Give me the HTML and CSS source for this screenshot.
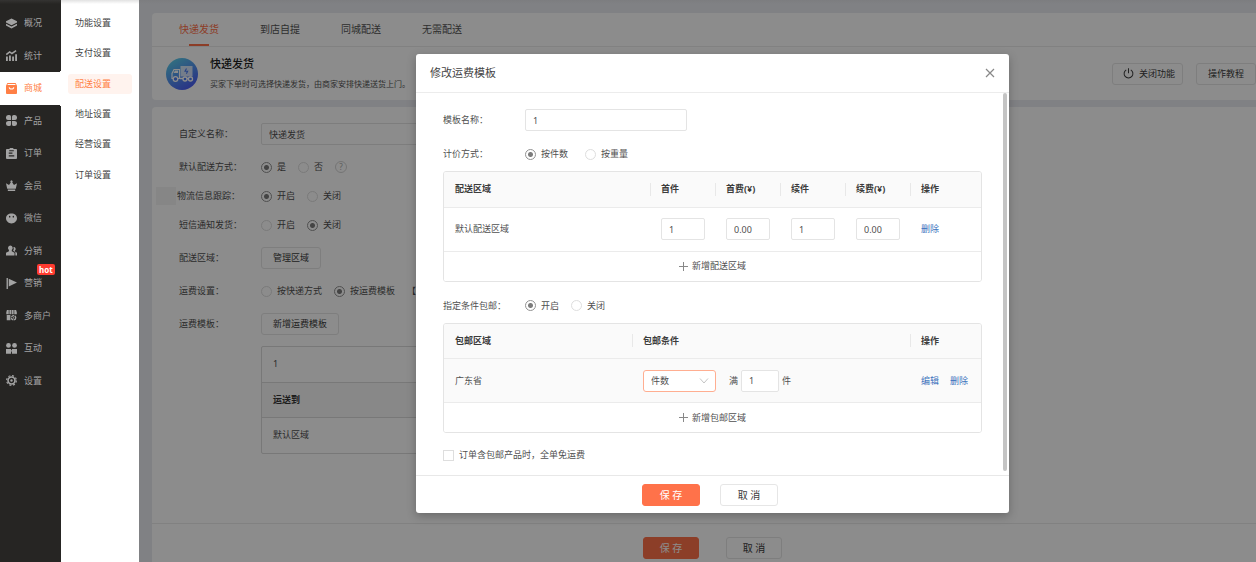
FILE: index.html
```html
<!DOCTYPE html>
<html lang="zh-CN">
<head>
    <meta charset="UTF-8">
    <meta name="viewport" content="width=device-width, initial-scale=1.0">
    <title>配送设置</title>
    <link rel="stylesheet" href="styles.css">
</head>
<body>
<div class="layout">
    <nav class="sidebar">
        <div class="sidebar-list">
            <a href="#" class="nav-item">
                <svg class="nav-icon" viewBox="0 0 12 12"><path d="M6 .6l6 3v1.200L6 7.800 0 4.800V3.600z"/><path d="M0 6.200l6 3 6-3v2L6 11.400 0 8.200z"/></svg>
                <span>概况</span>
            </a>
            <a href="#" class="nav-item">
                <svg class="nav-icon" viewBox="0 0 12 12"><path d="M.3 5L4 2l2.500 1.800L11 .8" fill="none" stroke="currentColor" stroke-width="1.600"/><path d="M0 7h2v5H0zM3.300 6h2v6h-2zM6.700 7h2v5h-2zM10 4.500h2V12h-2z"/></svg>
                <span>统计</span>
            </a>
            <a href="#" class="nav-item active">
                <svg class="nav-icon" viewBox="0 0 12 12"><path fill-rule="evenodd" d="M1.500 0h9L12 3v8a1 1 0 0 1-1 1H1a1 1 0 0 1-1-1V3zM2 1.200L1.500 2.200h9L10 1.200zM3 4.500a3 2.500 0 0 0 6 0H8a2 1.500 0 0 1-4 0z"/></svg>
                <span>商城</span>
            </a>
            <a href="#" class="nav-item">
                <svg class="nav-icon" viewBox="0 0 12 12"><path d="M2.700 0h1A2 2 0 0 1 5.500 2v3.500H2.700a2.700 2.700 0 0 1 0-5.500zM9.300 0a2.700 2.700 0 0 1 0 5.500H6.500V2a2 2 0 0 1 2-2zM2.700 6.500h2.800V10a2 2 0 0 1-2 2h-.8a2.700 2.700 0 0 1 0-5.500zM6.500 6.500h2.800a2.700 2.700 0 0 1 0 5.500h-.8a2 2 0 0 1-2-2z"/></svg>
                <span>产品</span>
            </a>
            <a href="#" class="nav-item">
                <svg class="nav-icon" viewBox="0 0 12 12"><path fill-rule="evenodd" d="M4 0h4v1h3a1 1 0 0 1 1 1v9a1 1 0 0 1-1 1H1a1 1 0 0 1-1-1V2a1 1 0 0 1 1-1h3zM3.500 2.500v1h5v-1zM3 5v1.200h4V5zM3 8v1.200h6V8z"/></svg>
                <span>订单</span>
            </a>
            <a href="#" class="nav-item">
                <svg class="nav-icon" viewBox="0 0 12 12"><path d="M0 3.500l3.300 2L5.300 2.500a1.200 1.200 0 1 1 1.400 0l2 3 3.300-2-1.300 6H1.300zM2 10.300h8V12H2z"/></svg>
                <span>会员</span>
            </a>
            <a href="#" class="nav-item">
                <svg class="nav-icon" viewBox="0 0 12 12"><path fill-rule="evenodd" d="M6 .6c3.400 0 6 2.200 6 5.200S9.400 11.400 6 11.400 0 8.800 0 5.800 2.600.6 6 .6zM4 3a.8 1 0 1 0 0 2 .8 1 0 0 0 0-2zM8 3a.8 1 0 1 0 0 2 .8 1 0 0 0 0-2z"/></svg>
                <span>微信</span>
            </a>
            <a href="#" class="nav-item">
                <svg class="nav-icon" viewBox="0 0 12 12"><path d="M4.800.5a2.600 2.800 0 0 1 1.500 5v1.200l3 1.800V11.500H0V8.500l3.200-1.800V5.500A2.700 2.800 0 0 1 4.800.5z"/><path d="M8 2.200a2.200 2.200 0 0 1 1.600 4v.8L12 8.500V11.500h-1.800V8L7.700 6.300C8.700 5 8.700 3.500 8 2.200z"/></svg>
                <span>分销</span>
            </a>
            <a href="#" class="nav-item">
                <svg class="nav-icon" viewBox="0 0 12 12"><path d="M.6 0h1.500v12H.6zM3 .8L12 5 3 9.200z"/></svg>
                <span>营销</span>
                <b class="hot">hot</b>
            </a>
            <a href="#" class="nav-item">
                <svg class="nav-icon" viewBox="0 0 12 12"><path d="M1 0h2v4.500H.3V2.500zM3.700 0H5.700v4.500h-2zM6.300 0h2v4.500h-2zM9 0h2l.8 2.500v2H9zM.8 5.500h4v5.800h-4z"/><circle cx="8.300" cy="8.500" r="2.300" fill="none" stroke="currentColor" stroke-width="1.500" stroke-dasharray="3 .6"/><path d="M7.700 8h1.200v1.200H7.700z"/></svg>
                <span>多商户</span>
            </a>
            <a href="#" class="nav-item">
                <svg class="nav-icon" viewBox="0 0 12 12"><circle cx="2.700" cy="2.700" r="2.600"/><circle cx="9.300" cy="2.700" r="2.600"/><path d="M0 6.500h5.500v5.300H0zM6.500 6.500H12v5.300H6.500zM5 7.800h2v1.400H5z"/></svg>
                <span>互动</span>
            </a>
            <a href="#" class="nav-item">
                <svg class="nav-icon" viewBox="0 0 12 12"><circle cx="6" cy="6" r="3.800" fill="none" stroke="currentColor" stroke-width="1.800"/><circle cx="6" cy="6" r="5.300" fill="none" stroke="currentColor" stroke-width="1.300" stroke-dasharray="2.160 2"/><circle cx="6" cy="6" r="1.300"/></svg>
                <span>设置</span>
            </a>
        </div>
    </nav>

    <nav class="submenu">
        <div class="submenu-list">
            <a href="#">功能设置</a>
            <a href="#">支付设置</a>
            <a href="#" class="active">配送设置</a>
            <a href="#">地址设置</a>
            <a href="#">经营设置</a>
            <a href="#">订单设置</a>
        </div>
    </nav>

    <main class="main">
        <section class="panel">
            <div class="tabs">
                <a href="#" class="tab active">快递发货</a>
                <a href="#" class="tab">到店自提</a>
                <a href="#" class="tab">同城配送</a>
                <a href="#" class="tab">无需配送</a>
            </div>
            <div class="intro">
                <svg class="truck" viewBox="0 0 32 32">
                    <defs>
                        <linearGradient id="truckBg" x1="0.2" y1="0" x2="0.8" y2="1">
                            <stop offset="0" stop-color="#5bd0ea"/>
                            <stop offset="1" stop-color="#4a55f5"/>
                        </linearGradient>
                    </defs>
                    <circle cx="16" cy="16" r="16" fill="url(#truckBg)"/>
                    <path d="M14.500 8h12v10.500h-12z" fill="#fff" fill-opacity=".75"/>
                    <path d="M6 20.500v-5l2-4h5.500v9z" fill="none" stroke="#fff" stroke-width="1.200"/>
                    <path d="M7.500 15l1.500-2.500h3V15z" fill="#fff"/>
                    <path d="M14 20.500h12.500" stroke="#fff" stroke-width="1.500"/>
                    <path d="M20.500 10.500l-1.500 2.800h2.600l-1.200 2.500" fill="none" stroke="#4a7af0" stroke-width="1.100"/>
                    <g fill="#4a7af0" stroke="#fff" stroke-width="1.300"><circle cx="9.500" cy="21" r="2.300"/><circle cx="19" cy="21" r="2"/><circle cx="24.500" cy="21" r="2"/></g>
                </svg>
                <div class="intro-text">
                    <h1>快递发货</h1>
                    <p>买家下单时可选择快递发货，由商家安排快递送货上门。</p>
                </div>
                <button type="button" class="btn btn-power">
                    <svg class="power" viewBox="0 0 12 12"><path d="M3.500 2a4.800 4.800 0 1 0 5 0M6 .3v5.500" fill="none" stroke="currentColor" stroke-width="1.100"/></svg>
                    关闭功能
                </button>
                <button type="button" class="btn">操作教程</button>
            </div>
        </section>

        <section class="panel panel-form">
            <div class="row">
                <label class="row-label" for="customName">自定义名称：</label>
                <input type="text" class="text name-input" id="customName" value="快递发货">
            </div>
            <div class="row compact">
                <span class="row-label">默认配送方式：</span>
                <div class="options">
                    <label><input type="radio" name="isDefault" checked>是</label>
                    <label><input type="radio" name="isDefault">否</label>
                    <span class="help">?</span>
                </div>
            </div>
            <div class="row compact tracking">
                <span class="patch"></span>
                <span class="row-label">物流信息跟踪：</span>
                <div class="options">
                    <label><input type="radio" name="tracking" checked>开启</label>
                    <label><input type="radio" name="tracking">关闭</label>
                </div>
            </div>
            <div class="row">
                <span class="row-label">短信通知发货：</span>
                <div class="options">
                    <label><input type="radio" name="sms">开启</label>
                    <label><input type="radio" name="sms" checked>关闭</label>
                </div>
            </div>
            <div class="row">
                <span class="row-label">配送区域：</span>
                <button type="button" class="btn">管理区域</button>
            </div>
            <div class="row">
                <span class="row-label">运费设置：</span>
                <div class="options">
                    <label><input type="radio" name="freight">按快递方式</label>
                    <label><input type="radio" name="freight" checked>按运费模板</label>
                    <span>【</span>
                </div>
            </div>
            <div class="row">
                <span class="row-label">运费模板：</span>
                <button type="button" class="btn">新增运费模板</button>
            </div>
            <div class="template">
                <div class="template-name">1</div>
                <table>
                    <thead><tr><th>运送到</th></tr></thead>
                    <tbody><tr><td>默认区域</td></tr></tbody>
                </table>
            </div>
        </section>

        <div class="page-footer">
            <button type="button" class="btn btn-primary">保 存</button>
            <button type="button" class="btn">取 消</button>
        </div>

        <div class="overlay">
            <div class="modal" role="dialog" aria-labelledby="modalTitle">
                <div class="modal-header">
                    <h2 id="modalTitle">修改运费模板</h2>
                    <button type="button" class="close" aria-label="关闭">
                        <svg viewBox="0 0 10 10"><path d="M1 1l8 8M9 1L1 9" fill="none" stroke="currentColor" stroke-width="1.200"/></svg>
                    </button>
                </div>
                <div class="modal-body">
                    <form class="modal-form">
                        <div class="field">
                            <label class="field-label" for="templateName">模板名称：</label>
                            <input type="text" class="text template-input" id="templateName" value="1">
                        </div>
                        <div class="field">
                            <span class="field-label">计价方式：</span>
                            <div class="options wide">
                                <label><input type="radio" name="pricing" checked>按件数</label>
                                <label><input type="radio" name="pricing">按重量</label>
                            </div>
                        </div>
                        <div class="grid-table">
                            <table>
                                <thead>
                                    <tr>
                                        <th class="col-area">配送区域</th>
                                        <th class="col-num">首件</th>
                                        <th class="col-num">首费(¥)</th>
                                        <th class="col-num">续件</th>
                                        <th class="col-num">续费(¥)</th>
                                        <th>操作</th>
                                    </tr>
                                </thead>
                                <tbody>
                                    <tr>
                                        <td>默认配送区域</td>
                                        <td><input type="text" class="text num" aria-label="首件" value="1"></td>
                                        <td><input type="text" class="text num" aria-label="首费" value="0.00"></td>
                                        <td><input type="text" class="text num" aria-label="续件" value="1"></td>
                                        <td><input type="text" class="text num" aria-label="续费" value="0.00"></td>
                                        <td><a href="#">删除</a></td>
                                    </tr>
                                </tbody>
                            </table>
                            <button type="button" class="add-row">
                                <svg viewBox="0 0 9 9"><path d="M4.500 0v9M0 4.500h9" stroke="currentColor" fill="none"/></svg>
                                新增配送区域
                            </button>
                        </div>
                        <div class="field">
                            <span class="field-label">指定条件包邮：</span>
                            <div class="options">
                                <label><input type="radio" name="freeShip" checked>开启</label>
                                <label><input type="radio" name="freeShip">关闭</label>
                            </div>
                        </div>
                        <div class="grid-table">
                            <table>
                                <thead>
                                    <tr>
                                        <th class="col-free">包邮区域</th>
                                        <th>包邮条件</th>
                                        <th class="col-action">操作</th>
                                    </tr>
                                </thead>
                                <tbody>
                                    <tr class="hovered">
                                        <td>广东省</td>
                                        <td>
                                            <div class="condition">
                                                <div class="select">
                                                    <select aria-label="包邮条件">
                                                        <option>件数</option>
                                                    </select>
                                                    <svg viewBox="0 0 10 6"><path d="M1 .5l4 4.500 4-4.500" fill="none" stroke="currentColor"/></svg>
                                                </div>
                                                <label for="freeCount">满</label>
                                                <input type="text" class="text count" id="freeCount" value="1">
                                                <span>件</span>
                                            </div>
                                        </td>
                                        <td><div class="links"><a href="#">编辑</a><a href="#">删除</a></div></td>
                                    </tr>
                                </tbody>
                            </table>
                            <button type="button" class="add-row">
                                <svg viewBox="0 0 9 9"><path d="M4.500 0v9M0 4.500h9" stroke="currentColor" fill="none"/></svg>
                                新增包邮区域
                            </button>
                        </div>
                        <label class="check"><input type="checkbox">订单含包邮产品时，全单免运费</label>
                    </form>
                    <div class="scrollbar"></div>
                </div>
                <div class="modal-footer">
                    <button type="button" class="btn btn-primary">保 存</button>
                    <button type="button" class="btn">取 消</button>
                </div>
            </div>
        </div>
    </main>
</div>
</body>
</html>
```

FILE: styles.css
```css
/* General Reset */
* {
    margin: 0;
    padding: 0;
    box-sizing: border-box;
}

body {
    font-family: "Noto Sans", "Noto Sans CJK SC", sans-serif;
    font-size: 9px;
    line-height: 14px;
    color: #505050;
}

a {
    text-decoration: none;
    color: #3a72bd;
}

button, input, select {
    font: inherit;
    color: inherit;
}

button {
    cursor: pointer;
}

.layout {
    display: flex;
    min-height: 100vh;
    position: relative;
}

/* shadow under the top bar */
.layout::before {
    content: "";
    position: absolute;
    top: 0;
    left: 0;
    right: 0;
    height: 4px;
    z-index: 5;
    background: linear-gradient(rgba(110, 110, 110, 0.2), rgba(110, 110, 110, 0));
}

/* Sidebar */
.sidebar {
    width: 61px;
    flex: none;
    padding-top: 7px;
    background: #262523;
}

.sidebar-list {
    display: grid;
    grid-template-rows: repeat(12, 1fr);
    height: 390px;
}

.nav-item {
    position: relative;
    display: flex;
    align-items: center;
    gap: 7px;
    padding-left: 6px;
    color: #a3a3a3;
}

.nav-icon {
    width: 11px;
    height: 11px;
    fill: currentColor;
}

.nav-item.active {
    background: #fff;
    color: #ff7f45;
}

.nav-item.active::before,
.nav-item.active::after {
    content: "";
    position: absolute;
    right: 0;
    width: 3px;
    height: 3px;
}

.nav-item.active::before {
    top: -3px;
    background: radial-gradient(circle at 0 0, transparent 3px, #fff 3px);
}

.nav-item.active::after {
    bottom: -3px;
    background: radial-gradient(circle at 0 100%, transparent 3px, #fff 3px);
}

.hot {
    position: absolute;
    top: -3px;
    left: 37px;
    padding: 0 2px;
    border-radius: 2px;
    background: #ff3b30;
    color: #fff;
    font-size: 8px;
    line-height: 11px;
}

.submenu {
    width: 78px;
    flex: none;
    padding: 8px 7px 0;
    background: #fff;
}

.submenu-list {
    display: grid;
    grid-template-rows: repeat(6, 1fr);
    align-items: center;
    height: 182px;
}

.submenu a {
    padding: 3px 7px;
    border-radius: 3px;
    color: #444;
}

.submenu a.active {
    background: #fff3ee;
    color: #ff7f45;
}

/* Page */
.main {
    flex: 1;
    min-width: 0;
    position: relative;
    display: flex;
    flex-direction: column;
    padding: 13px 0 0 13px;
    background: #e9ecf0;
}

.panel {
    margin-bottom: 7px;
    border-radius: 4px 0 0 4px;
    background: #fff;
}

.tabs {
    display: flex;
    gap: 41px;
    padding-left: 27px;
    border-bottom: 1px solid #ebebeb;
    font-size: 10px;
}

.tab {
    position: relative;
    line-height: 33px;
    color: #555;
}

.tab.active {
    color: #ff6f47;
}

.tab.active::after {
    content: "";
    position: absolute;
    left: 10px;
    right: 10px;
    bottom: 0;
    height: 2px;
    background: #ff6f47;
}

.intro {
    display: flex;
    align-items: center;
    gap: 13px;
    height: 53px;
    padding-left: 14px;
}

.truck {
    width: 32px;
    height: 32px;
}

.intro-text {
    flex: 1;
    margin-left: -1px;
}

.intro h1 {
    margin-bottom: 5px;
    font-size: 11px;
    font-weight: 500;
    line-height: 16px;
    color: #222;
}

.intro p {
    font-size: 8px;
    color: #555;
}

.btn {
    height: 22px;
    padding: 0 11px;
    border: 1px solid #e6e6e6;
    border-radius: 3px;
    background: #fff;
    color: #3c3c3c;
    line-height: 18px;
}

.btn-primary {
    border-color: #ff724a;
    background: #ff724a;
    color: #fff;
}

.btn-power {
    display: flex;
    align-items: center;
    gap: 5px;
    padding: 0 7px 0 10px;
}

.power {
    width: 11px;
    height: 11px;
}

.text {
    height: 22px;
    padding: 0 7px;
    border: 1px solid #e4e4e4;
    border-radius: 2px;
    background: #fff;
    outline: none;
}

.panel-form {
    flex: 1;
    margin-bottom: 0;
    padding-top: 16px;
    border-radius: 4px 0 0 0;
}

.row {
    display: flex;
    align-items: center;
    height: 22px;
    margin-bottom: 11px;
    padding-left: 27px;
}

.row.compact {
    margin-bottom: 7px;
}

.row-label {
    width: 82px;
}

.row.tracking {
    padding-left: 4px;
}

.patch {
    width: 20px;
    height: 18px;
    margin-right: 1px;
    background: #f5f5f5;
}

.tracking .row-label {
    width: 84px;
}

.name-input {
    width: 240px;
}

.options {
    display: flex;
    align-items: center;
    gap: 12px;
}

.options.wide {
    gap: 17px;
}

.options label,
.check {
    display: flex;
    align-items: center;
    gap: 5px;
}

input[type="radio"],
input[type="checkbox"] {
    appearance: none;
    width: 11px;
    height: 11px;
    border: 1px solid #dedede;
    background: #fff;
}

input[type="radio"] {
    border-radius: 50%;
}

input[type="radio"]:checked {
    border-color: #929292;
    background: radial-gradient(circle, #7c7c7c 2px, #fff 3px);
}

.help {
    width: 12px;
    height: 12px;
    border: 1px solid #d4d4d4;
    border-radius: 50%;
    color: #aaa;
    font-size: 8px;
    line-height: 10px;
    text-align: center;
}

.template {
    width: 600px;
    margin-left: 109px;
    border: 1px solid #dadada;
    border-radius: 2px;
}

.template table {
    width: 100%;
    border-collapse: collapse;
}

.template-name,
.template th,
.template td {
    height: 35px;
    padding: 0 11px;
    line-height: 34px;
    text-align: left;
}

.template th {
    border-top: 1px solid #dadada;
    border-bottom: 1px solid #dadada;
    background: #f8f8f8;
    color: #333;
}

.page-footer {
    display: flex;
    align-items: center;
    justify-content: center;
    gap: 27px;
    height: 39px;
    padding: 9px 0 0 17px;
    border-top: 1px solid #ebebeb;
    background: #fff;
}

.page-footer .btn,
.modal-footer .btn {
    width: 56px;
    font-size: 10px;
}

/* Modal */
.overlay {
    position: absolute;
    inset: 0;
    display: flex;
    align-items: flex-start;
    justify-content: center;
    padding: 54px 0 0 30px;
    background: rgba(0, 0, 0, 0.45);
}

.modal {
    width: 593px;
    border-radius: 3px;
    background: #fff;
    box-shadow: 0 3px 10px rgba(0, 0, 0, 0.25);
}

.modal-header {
    display: flex;
    align-items: center;
    justify-content: space-between;
    height: 39px;
    padding: 0 14px;
    border-bottom: 1px solid #ececec;
}

.modal-header h2 {
    font-size: 11px;
    font-weight: 400;
    color: #444;
}

.close {
    display: flex;
    border: none;
    background: none;
    color: #888;
}

.close svg {
    width: 10px;
    height: 10px;
}

.modal-body {
    display: flex;
}

.modal-form {
    flex: 1;
    padding: 16px 21px 13px 27px;
}

.scrollbar {
    width: 4px;
    margin: 0 2px 4px 0;
    border-radius: 2px;
    background: #c4c4c4;
}

.field {
    display: flex;
    align-items: center;
    height: 22px;
    margin-bottom: 12px;
}

.field-label {
    width: 82px;
}

.template-input {
    width: 162px;
}

.field + .grid-table {
    margin-top: -6px;
}

.grid-table {
    margin-bottom: 13px;
    overflow: hidden;
    border: 1px solid #e4e4e4;
    border-radius: 3px;
}

.grid-table table {
    width: 100%;
    table-layout: fixed;
    border-collapse: collapse;
}

.grid-table th,
.grid-table td {
    padding-left: 11px;
    border-bottom: 1px solid #ebebeb;
    text-align: left;
}

.grid-table th {
    height: 35px;
    background: #fafafa;
    color: #3c3c3c;
}

/* short divider between header cells */
.grid-table th + th {
    background: linear-gradient(#e8e8e8, #e8e8e8) no-repeat left center / 1px 13px #fafafa;
}

.grid-table td {
    height: 44px;
}

.hovered {
    background: #fafafa;
}

.col-area {
    width: 206px;
}

.col-num {
    width: 65px;
}

.col-free {
    width: 35%;
}

.col-action {
    width: 71px;
}

.num {
    width: 44px;
}

.count {
    width: 38px;
}

.add-row {
    display: flex;
    align-items: center;
    justify-content: center;
    gap: 4px;
    width: 100%;
    height: 29px;
    border: none;
    background: #fff;
}

.add-row svg {
    width: 9px;
    height: 9px;
    color: #888;
}

.condition {
    display: flex;
    align-items: center;
    gap: 3px;
}

.select {
    position: relative;
    margin-right: 10px;
}

.select select {
    appearance: none;
    display: block;
    width: 73px;
    height: 22px;
    padding: 0 7px;
    border: 1px solid #ffae91;
    border-radius: 3px;
    background: #fff;
    outline: none;
}

.select svg {
    position: absolute;
    top: 8px;
    right: 7px;
    width: 10px;
    height: 6px;
    color: #c4c4c4;
    pointer-events: none;
}

.links {
    display: flex;
    gap: 11px;
}

.check {
    margin-top: 15px;
}

.modal-footer {
    display: flex;
    align-items: center;
    justify-content: center;
    gap: 20px;
    height: 38px;
    padding-right: 5px;
    border-top: 1px solid #e8e8e8;
}

.modal-footer .btn {
    width: 58px;
}
```
